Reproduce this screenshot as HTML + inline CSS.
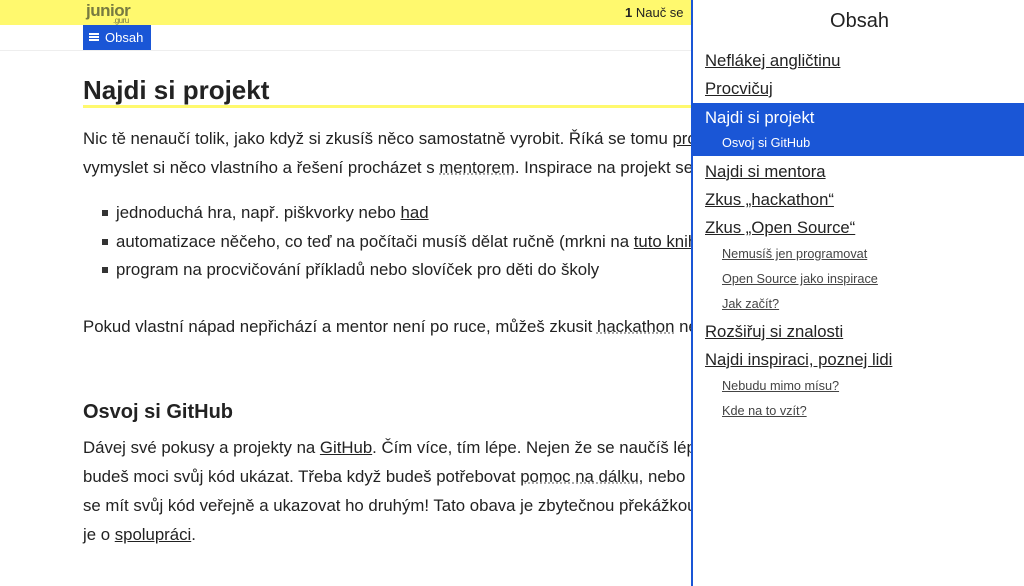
<!DOCTYPE html>
<html><head><meta charset="utf-8"><style>
body{margin:0;width:1024px;height:586px;overflow:hidden;font-family:"Liberation Sans",sans-serif;color:#222;background:#fff;position:relative}
.top{position:absolute;left:0;top:0;width:1024px;height:25px;background:#fff96e}
.logo{position:absolute;left:86px;top:1px;font-weight:bold;font-size:17px;color:#777a40;letter-spacing:-.5px}
.logo small{position:absolute;left:27px;top:15px;font-size:8px;font-weight:normal}
.crumb{position:absolute;left:625px;top:5px;font-size:13px}
.bar{position:absolute;left:0;top:25px;width:1024px;height:25px;border-bottom:1px solid #eee}
.btn{position:absolute;left:83px;top:25px;width:68px;height:25px;background:#1a56d6;color:#fff;font-size:13px;line-height:25px}
.btn span{position:absolute;left:6px;top:8px;width:10px;height:1.5px;background:#fff;box-shadow:0 3px 0 #fff,0 6px 0 #fff}
.btn b{font-weight:normal;position:absolute;left:22px}
.c{position:absolute;left:83px;font-size:16.8px;white-space:nowrap}
h1{position:absolute;left:83px;top:75px;margin:0;font-size:26px;width:620px;border-bottom:3px solid #fff96e;height:30px;line-height:30px}
h2{position:absolute;left:83px;top:401px;margin:0;font-size:20px}
a{color:#222;text-decoration:underline}
.d{text-decoration:underline dotted #999}
.li::before{content:"";position:absolute;left:-14px;top:7px;width:6px;height:6px;background:#333}
.li{left:116px}
.p{position:absolute;left:691px;top:0;width:333px;height:586px;background:#fff;border-left:2px solid #1a56d6;font-size:16.7px}
.p .t{position:absolute;top:10px;width:100%;text-align:center;font-size:20px}
.p a{position:absolute;left:12px;white-space:nowrap}
.p a.s{left:29px;font-size:12.7px;color:#444}
.hl{position:absolute;left:0;top:103px;width:333px;height:53px;background:#1a56d6}
.p a.w{color:#fff;text-decoration:none}
</style></head><body>
<div class="top"><div class="logo">junior<small>.guru</small></div><div class="crumb"><b>1</b> Nauč se</div></div>
<div class="bar"></div>
<div class="btn"><span></span><b>Obsah</b></div>
<h1>Najdi si projekt</h1>
<div class="c" style="top:129px">Nic tě nenaučí tolik, jako když si zkusíš něco samostatně vyrobit. Říká se tomu <a>projekt</a></div>
<div class="c" style="top:158px">vymyslet si něco vlastního a řešení procházet s <a class="d">mentorem</a>. Inspirace na projekt se</div>
<div class="c li" style="top:203px">jednoduchá hra, např. piškvorky nebo <a>had</a></div>
<div class="c li" style="top:232px">automatizace něčeho, co teď na počítači musíš dělat ručně (mrkni na <a>tuto knihu</a></div>
<div class="c li" style="top:260px">program na procvičování příkladů nebo slovíček pro děti do školy</div>
<div class="c" style="top:317px">Pokud vlastní nápad nepřichází a mentor není po ruce, můžeš zkusit <a class="d">hackathon</a> ne</div>
<h2>Osvoj si GitHub</h2>
<div class="c" style="top:438px">Dávej své pokusy a projekty na <a>GitHub</a>. Čím více, tím lépe. Nejen že se naučíš lépe</div>
<div class="c" style="top:467px">budeš moci svůj kód ukázat. Třeba když budeš potřebovat <a class="d">pomoc na dálku</a>, nebo</div>
<div class="c" style="top:496px">se mít svůj kód veřejně a ukazovat ho druhým! Tato obava je zbytečnou překážkou</div>
<div class="c" style="top:525px">je o <a>spolupráci</a>.</div>
<div class="p">
<div class="t">Obsah</div>
<a style="top:51px">Neflákej angličtinu</a>
<a style="top:79px">Procvičuj</a>
<div class="hl"></div>
<a class="w" style="top:108px">Najdi si projekt</a>
<a class="s w" style="top:136px">Osvoj si GitHub</a>
<a style="top:162px">Najdi si mentora</a>
<a style="top:190px">Zkus „hackathon“</a>
<a style="top:218px">Zkus „Open Source“</a>
<a class="s" style="top:247px">Nemusíš jen programovat</a>
<a class="s" style="top:272px">Open Source jako inspirace</a>
<a class="s" style="top:297px">Jak začít?</a>
<a style="top:322px">Rozšiřuj si znalosti</a>
<a style="top:350px">Najdi inspiraci, poznej lidi</a>
<a class="s" style="top:379px">Nebudu mimo mísu?</a>
<a class="s" style="top:404px">Kde na to vzít?</a>
</div>
</body></html>
